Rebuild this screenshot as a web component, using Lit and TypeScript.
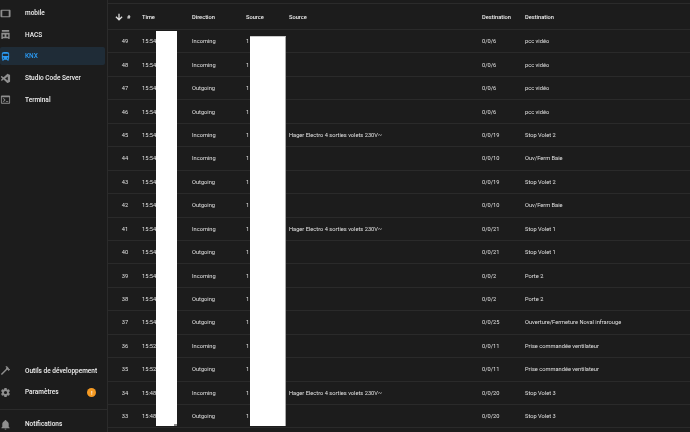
import { LitElement, html, css, svg } from "lit";
import { customElement } from "lit/decorators.js";

const ICONS: Record<string, string> = {
  tablet: "M19,18H5V6H19M21,4H3C1.89,4 1,4.89 1,6V18A2,2 0 0,0 3,20H21A2,2 0 0,0 23,18V6C23,4.89 22.1,4 21,4Z",
  hacs: "M4,2H20V6H4ZM3,8H21V22H18V20H6V22H3ZM6,12V17H10V12ZM14,12V17H18V12Z",
  bus: "M18,11H6V6H18M16.5,17A1.5,1.5 0 0,1 15,15.5A1.5,1.5 0 0,1 16.5,14A1.5,1.5 0 0,1 18,15.5A1.5,1.5 0 0,1 16.5,17M7.5,17A1.5,1.5 0 0,1 6,15.5A1.5,1.5 0 0,1 7.5,14A1.5,1.5 0 0,1 9,15.5A1.5,1.5 0 0,1 7.5,17M4,16C4,16.88 4.39,17.67 5,18.22V20A1,1 0 0,0 6,21H7A1,1 0 0,0 8,20V19H16V20A1,1 0 0,0 17,21H18A1,1 0 0,0 19,20V18.22C19.61,17.67 20,16.88 20,16V6C20,2.5 16.42,2 12,2C7.58,2 4,2.5 4,6V16Z",
  code: "M17,16.47V7.39L11,11.93M2.22,9.19C1.9,8.85 1.84,8.25 2.15,7.9L3.35,6.8C3.55,6.62 4.04,6.54 4.4,6.83L7.82,9.43L15.74,2.18C16.06,1.86 16.61,1.73 17.24,2.06L21.24,3.97C21.6,4.18 22,4.5 22,5.17V18.67C22,19.11 21.68,19.58 21.33,19.77L16.93,21.87C16.61,22 16,21.88 15.79,21.67L7.77,14.37L4.4,16.97C4.02,17.23 3.55,17.16 3.35,16.97L2.15,15.88C1.83,15.55 1.87,15 2.2,14.68L5.2,11.93L2.22,9.19Z",
  console: "M20,19V7H4V19H20M20,3A2,2 0 0,1 22,5V19A2,2 0 0,1 20,21H4A2,2 0 0,1 2,19V5C2,3.89 2.9,3 4,3H20M13,17V15H18V17H13M9.58,13L5.57,9H8.4L11.7,12.3C12.09,12.69 12.09,13.33 11.7,13.72L8.42,17H5.59L9.58,13Z",
  hammer: "M2,19.63L13.43,8.2L12.72,7.5L14.14,6.07L12,3.89C13.2,2.7 15.09,2.7 16.27,3.89L19.87,7.5L18.45,8.91H21.29L22,9.62L18.45,13.21L17.74,12.5V9.62L16.27,11.04L15.56,10.33L4.13,21.76L2,19.63Z",
  cog: "M12,15.5A3.5,3.5 0 0,1 8.5,12A3.5,3.5 0 0,1 12,8.5A3.5,3.5 0 0,1 15.5,12A3.5,3.5 0 0,1 12,15.5M19.43,12.97C19.47,12.65 19.5,12.33 19.5,12C19.5,11.67 19.47,11.34 19.43,11L21.54,9.37C21.73,9.22 21.78,8.95 21.66,8.73L19.66,5.27C19.54,5.05 19.27,4.96 19.05,5.05L16.56,6.05C16.04,5.66 15.5,5.32 14.87,5.07L14.5,2.42C14.46,2.18 14.25,2 14,2H10C9.75,2 9.54,2.18 9.5,2.42L9.13,5.07C8.5,5.32 7.96,5.66 7.44,6.05L4.95,5.05C4.73,4.96 4.46,5.05 4.34,5.27L2.34,8.73C2.21,8.95 2.27,9.22 2.46,9.37L4.57,11C4.53,11.34 4.5,11.67 4.5,12C4.5,12.33 4.53,12.65 4.57,12.97L2.46,14.63C2.27,14.78 2.21,15.05 2.34,15.27L4.34,18.73C4.46,18.95 4.73,19.03 4.95,18.95L7.44,17.94C7.96,18.34 8.5,18.68 9.13,18.93L9.5,21.58C9.54,21.82 9.75,22 10,22H14C14.25,22 14.46,21.82 14.5,21.58L14.87,18.93C15.5,18.67 16.04,18.34 16.56,17.94L19.05,18.95C19.27,19.03 19.54,18.95 19.66,18.73L21.66,15.27C21.78,15.05 21.73,14.78 21.54,14.63L19.43,12.97Z",
  bell: "M21,19V20H3V19L5,17V11C5,7.9 7.03,5.17 10,4.29C10,4.19 10,4.1 10,4A2,2 0 0,1 12,2A2,2 0 0,1 14,4C14,4.1 14,4.19 14,4.29C16.97,5.17 19,7.9 19,11V17L21,19M14,21A2,2 0 0,1 12,23A2,2 0 0,1 10,21",
  down: "M10.5,4H13.5V15L18.3,10.2L20.4,12.3L12,20.7L3.6,12.3L5.7,10.2L10.5,15V4Z",
};

const H = "Hager Electro 4 sorties volets 230V~";
const ROWS: [string, string, string, string, string, string][] = [
  ["49", "15:54", "Incoming", "", "0/0/6", "pcc vidéo"],
  ["48", "15:54", "Incoming", "", "0/0/6", "pcc vidéo"],
  ["47", "15:54", "Outgoing", "", "0/0/6", "pcc vidéo"],
  ["46", "15:54", "Outgoing", "", "0/0/6", "pcc vidéo"],
  ["45", "15:54", "Incoming", H, "0/0/19", "Stop Volet 2"],
  ["44", "15:54", "Incoming", "", "0/0/10", "Ouv/Ferm Baie"],
  ["43", "15:54", "Outgoing", "", "0/0/19", "Stop Volet 2"],
  ["42", "15:54", "Outgoing", "", "0/0/10", "Ouv/Ferm Baie"],
  ["41", "15:54", "Incoming", H, "0/0/21", "Stop Volet 1"],
  ["40", "15:54", "Outgoing", "", "0/0/21", "Stop Volet 1"],
  ["39", "15:54", "Incoming", "", "0/0/2", "Porte 2"],
  ["38", "15:54", "Outgoing", "", "0/0/2", "Porte 2"],
  ["37", "15:54", "Outgoing", "", "0/0/25", "Ouverture/Fermeture Noval infrarouge"],
  ["36", "15:52", "Incoming", "", "0/0/11", "Prise commandée ventilateur"],
  ["35", "15:52", "Outgoing", "", "0/0/11", "Prise commandée ventilateur"],
  ["34", "15:48", "Incoming", H, "0/0/20", "Stop Volet 3"],
  ["33", "15:48", "Outgoing", "", "0/0/20", "Stop Volet 3"],
];

const icon = (name: string) =>
  html`<svg class="icon" viewBox="0 0 24 24">${svg`<path fill-rule="evenodd" d=${ICONS[name]}></path>`}</svg>`;

@customElement("app-root")
export class AppRoot extends LitElement {
  static styles = css`
    :host {
      display: flex;
      width: 690px;
      height: 432px;
      overflow: hidden;
      background: #1c1c1c;
      color: #e1e1e1;
      font-family: Roboto, "Liberation Sans", sans-serif;
      font-size: 5.7px;
      position: relative;
    }
    .side {
      width: 108px;
      height: 432px;
      flex: none;
      box-sizing: border-box;
      border-right: 1px solid #2b2b2b;
      display: flex;
      flex-direction: column;
      padding-top: 4px;
      filter: blur(0.3px);
    }
    .nav { display: flex; flex-direction: column; }
    .spacer { flex: 1; }
    .item {
      height: 18px;
      flex: none;
      margin-bottom: 3.7px;
      display: flex;
      align-items: center;
      font-size: 6.5px;
      font-weight: 500;
      white-space: nowrap;
      color: #f0f0f0;
      margin-right: 2px;
      border-radius: 2px;
    }
    .item.active { background: #1f2c37; color: #2b9af3; }
    .item .icon {
      width: 11px;
      height: 11px;
      margin-right: 14px;
      fill: #8f8f8f;
      flex: none;
    }
    .item.active .icon { fill: #2b9af3; }
    .badge {
      margin-left: auto;
      margin-right: 8.8px;
      width: 9px;
      height: 9px;
      border-radius: 50%;
      background: #f59a23;
      color: #fff;
      font-size: 6px;
      display: flex;
      align-items: center;
      justify-content: center;
    }
    .foot {
      border-top: 1px solid #2b2b2b;
      margin-top: 4px;
      height: 23px;
      display: flex;
      flex-direction: column;
      padding-top: 5px;
      box-sizing: border-box;
    }
    .main {
      flex: 1;
      padding-top: 3px;
      min-width: 0;
      filter: blur(0.3px);
    }
    .table { border-top: 1px solid #2b2b2b; }
    .row {
      display: grid;
      grid-template-columns: 34px 50px 54px 43px 193px 43px 1fr;
      height: 23.44px;
      box-sizing: border-box;
      align-items: center;
      border-bottom: 1px solid #2a2a2a;
      color: #e0e0e0;
      white-space: nowrap;
    }
    .row.head {
      height: 26px;
      font-weight: 500;
      color: #f0f0f0;
    }
    .num {
      display: flex;
      align-items: center;
      justify-content: center;
    }
    .head .num { justify-content: flex-start; padding-left: 6px; gap: 3px; }
    .num .icon { width: 10px; height: 10px; fill: #e1e1e1; }
    .mask { position: absolute; background: #fff; box-sizing: border-box; }
    .m1 { left: 155.5px; top: 31px; width: 21.5px; height: 395px; }
    .m1::after {
      content: "";
      position: absolute;
      right: 0;
      bottom: 0;
      width: 3.5px;
      height: 2.5px;
      background: #8a8a8a;
    }
    .m2 {
      left: 250px;
      top: 35.5px;
      width: 36px;
      height: 390.5px;
      border-right: 1px solid #a8a8a8;
      border-top: 1px solid #c8c8c8;
    }
  `;

  render() {
    return html`
      <aside class="side">
        <nav class="nav">
          ${[
            ["tablet", "mobile", false],
            ["hacs", "HACS", false],
            ["bus", "KNX", true],
            ["code", "Studio Code Server", false],
            ["console", "Terminal", false],
          ].map(
            ([i, t, a]) =>
              html`<div class="item ${a ? "active" : ""}">${icon(i as string)}<span>${t}</span></div>`
          )}
        </nav>
        <div class="spacer"></div>
        <div class="nav">
          <div class="item">${icon("hammer")}<span>Outils de développement</span></div>
          <div class="item">${icon("cog")}<span>Paramètres</span><span class="badge">!</span></div>
        </div>
        <div class="foot">
          <div class="item">${icon("bell")}<span>Notifications</span></div>
        </div>
      </aside>
      <main class="main">
        <div class="table">
          <div class="row head">
            <div class="num">${icon("down")}<span>#</span></div>
            <div>Time</div><div>Direction</div><div>Source</div><div>Source</div>
            <div>Destination</div><div>Destination</div>
          </div>
          ${ROWS.map(
            (r) => html`<div class="row">
              <div class="num">${r[0]}</div>
              <div>${r[1]}</div>
              <div>${r[2]}</div>
              <div>1</div>
              <div>${r[3]}</div>
              <div>${r[4]}</div>
              <div>${r[5]}</div>
            </div>`
          )}
        </div>
      </main>
      <div class="mask m1"></div>
      <div class="mask m2"></div>
    `;
  }
}
